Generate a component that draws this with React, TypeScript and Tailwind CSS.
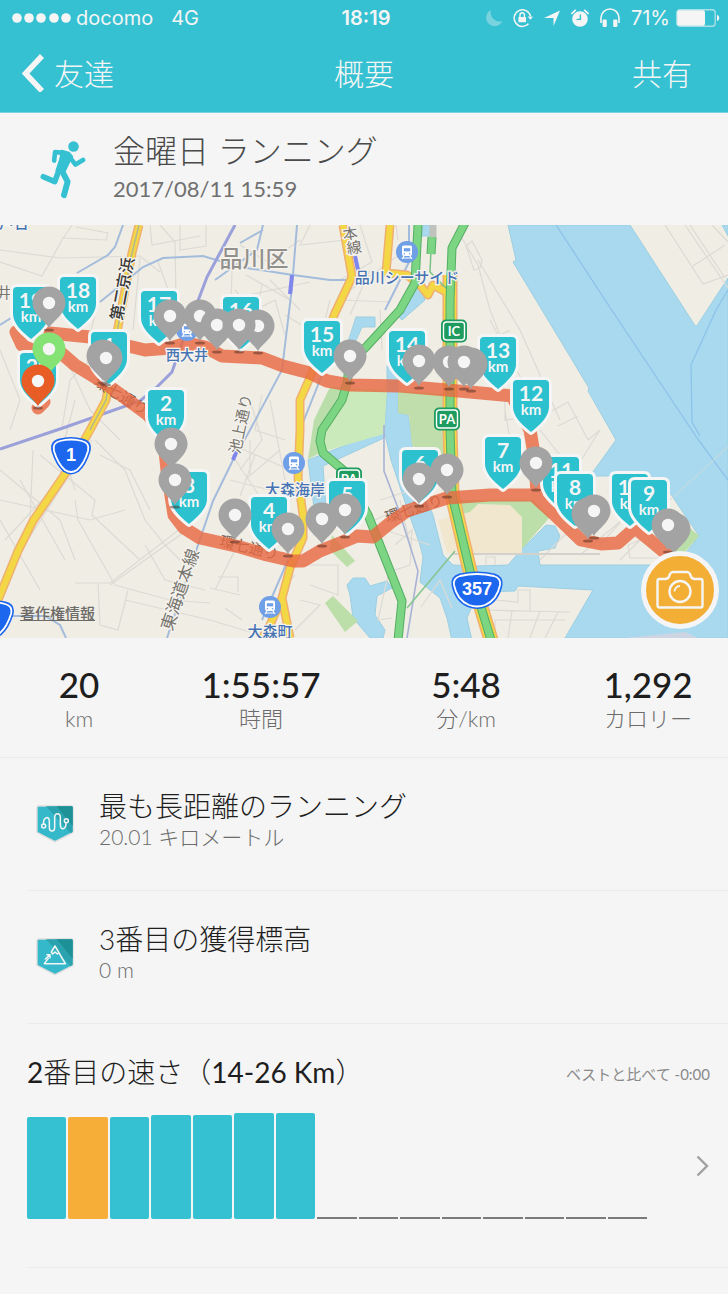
import type { ReactNode } from "react";

type Point = [number, number];

interface Split {
  km: number;
  at: Point;
}

interface Pin {
  at: Point;
  color?: string;
}

const stats = [
  { value: "20", label: "km" },
  { value: "1:55:57", label: "時間" },
  { value: "5:48", label: "分/km" },
  { value: "1,292", label: "カロリー" },
];

// bar heights in px, 0 = no run yet
const paceBars = [102, 102, 102, 104, 104, 106, 106, 0, 0, 0, 0, 0, 0, 0, 0];
const currentBar = 1;

const splits: Split[] = [
  { km: 19, at: [31, 287] },
  { km: 18, at: [78, 277] },
  { km: 17, at: [159, 291] },
  { km: 16, at: [241, 297] },
  { km: 15, at: [322, 321] },
  { km: 14, at: [407, 331] },
  { km: 13, at: [498, 337] },
  { km: 12, at: [531, 380] },
  { km: 1, at: [109, 332] },
  { km: 2, at: [166, 390] },
  { km: 20, at: [38, 353] },
  { km: 3, at: [189, 472] },
  { km: 4, at: [269, 497] },
  { km: 5, at: [347, 481] },
  { km: 6, at: [420, 450] },
  { km: 7, at: [503, 437] },
  { km: 11, at: [561, 457] },
  { km: 8, at: [575, 474] },
  { km: 10, at: [630, 474] },
  { km: 9, at: [649, 480] },
];

const pins: Pin[] = [
  { at: [49, 303] },
  { at: [49, 349], color: "#84e374" },
  { at: [38, 381], color: "#e85c26" },
  { at: [103, 356] },
  { at: [106, 358] },
  { at: [200, 316] },
  { at: [170, 316] },
  { at: [258, 326] },
  { at: [217, 325] },
  { at: [239, 325] },
  { at: [350, 356] },
  { at: [471, 364] },
  { at: [449, 362] },
  { at: [464, 362] },
  { at: [419, 361] },
  { at: [171, 444] },
  { at: [175, 480] },
  { at: [235, 515] },
  { at: [288, 529] },
  { at: [322, 519] },
  { at: [345, 510] },
  { at: [447, 470] },
  { at: [419, 479] },
  { at: [536, 463] },
  { at: [588, 514] },
  { at: [594, 511] },
  { at: [674, 529] },
  { at: [668, 525] },
];

const streets = [
  "M0 262 L42 276 L62 240 L72 225 M62 238 L106 240 L108 233 L76 227 M0 250 L60 258 L140 256 L160 272 M160 225 L175 242 L176 300 M150 225 L152 245 L200 236",
  "M180 225 V250 L206 246 V225 M158 262 L172 300 M98 302 L90 335 M140 258 L133 330 M60 345 L90 410 L120 440 M100 350 L70 380 L62 428 M0 350 L20 400 L10 430",
  "M75 400 L62 450 L75 490 M95 440 L125 470 L145 520 L165 545 L180 560 M0 470 L60 520 L75 560 M0 500 L90 520 L125 510 M5 540 L70 470 M15 560 L92 440",
  "M0 520 L40 590 M20 480 L65 560 M40 455 L95 500 L92 515 L140 560 M33 450 L30 520 M100 455 L130 470 L150 510 M75 583 L110 583 L185 525 M75 500 L78 520 L115 585 L170 600 L210 603",
  "M110 585 L190 528 M98 583 L100 625 L118 630 L128 590 M125 600 L210 620 L250 632 M210 588 L240 595 M215 590 L235 550 M218 577 H238 V592 M225 608 L242 620 M145 545 L165 580 L205 590",
  "M240 245 L268 262 L300 240 M246 275 L290 300 M225 300 L310 282 M235 290 L270 330 M262 285 L255 320 M270 280 L300 310 M285 315 L310 330 L330 320 M230 340 L232 270 M245 315 L275 300 L285 335",
  "M310 225 L300 245 L345 240 M330 300 L320 340 M340 300 L390 302 M360 225 L372 262 L340 280 M396 225 L398 240 M380 310 L382 350 M370 270 L350 315 M350 290 L420 240 M460 235 L478 265 L490 310 L500 335 L510 330 M478 260 L520 330 L560 420",
  "M466 246 L472 241 L482 260 L480 268 L474 270 Z M490 320 L530 395 M505 410 L510 440 M550 412 L568 402 L588 440 M558 426 L578 416 M545 395 L520 405 M505 400 V420 L515 419",
  "M665 225 L703 284 L728 275 M693 266 L725 245 M685 225 L728 288 M690 225 L725 278 M712 225 L728 242 M588 440 L600 430 L575 470 M540 430 L560 455",
  "M250 400 L262 440 L240 470 M262 395 L255 430 L285 440 M240 448 L290 470 M245 480 L280 450 M250 440 V475 M270 400 L285 480 M230 480 L270 490 M232 455 L262 500 M240 496 L255 455",
  "M310 520 L330 510 M300 565 L338 565 V595 L310 585 M300 600 L320 605 L295 630 M295 575 L280 590 M380 500 L412 490 L415 515 M385 530 L430 545 M395 545 L412 530 L410 565 L395 570 M400 500 L410 545",
  "M375 520 L400 508 M380 550 L400 600 M388 575 L378 620 L392 618 M421 607 L440 580 L452 608 M495 600 L518 602 V590 H530 V611 H505 M480 610 L570 612 M495 638 V620 H565 M512 611 L508 638 M540 611 L530 638 M558 612 L545 638",
  "M486 565 V557 H495 V565 M540 560 L600 500 M580 555 L640 505 L670 545 M620 560 L640 540 L628 545 L630 558 H660 M600 545 L640 500",
];

const route =
  "M44 402 L38 408 M16 332 L22 345 L36 352 L60 352 L75 365 L106 384 L147 414 L163 432 L167 470 L174 515 L184 528 L200 538 L240 547 L267 555 L293 561 L303 561 L320 551 L340 543 L357 536 L373 537 L390 523 L407 511 L447 498 L490 495 L533 495 L555 515 L581 540 L601 544 L618 543 L635 528 L651 541 L675 561 M50 333 L90 337 L145 350 L170 348 L187 343 L205 347 L222 356 L262 358 L283 366 L310 373 L327 381 L350 385 L400 386 L470 392 L512 396 L530 430 L535 460 L537 495";

function StatusBar() {
  return (
    <div className="grid h-9 grid-cols-3 items-center pr-2 pl-3 font-['Inter',sans-serif] text-xl">
      <div className="flex items-center">
        <svg viewBox="0 0 60 10" className="mr-1 h-[10px] w-[60px] shrink-0 fill-current" aria-hidden="true">
          {[5, 17, 29, 42, 54].map((x) => (
            <circle key={x} cx={x} cy="5" r="4.8" />
          ))}
        </svg>
        <span>docomo</span>
        <span className="ml-[18px]">4G</span>
      </div>
      <div className="text-center font-semibold">18:19</div>
      <div className="flex items-center justify-end gap-[10px]">
        <svg viewBox="0 0 18 18" className="h-[18px] w-[18px] shrink-0 fill-current opacity-35" aria-hidden="true">
          <path d="M6 1 A8.5 8.5 0 1 0 17.5 12 A9 9 0 0 1 6 1 Z" />
        </svg>
        <svg viewBox="0 0 20 20" className="h-5 w-5 shrink-0 fill-none stroke-current" aria-hidden="true">
          <path d="M17.5 8 A8.3 8.3 0 1 0 15.5 15.8" strokeWidth="1.5" />
          <path d="M14.8 8.5 H20 L17.4 11.8 Z" className="fill-current stroke-none" />
          <path d="M5.4 9 H13 V14.2 H5.4 Z" className="fill-current stroke-none" />
          <path d="M7 9.5 V7 a2.2 2.2 0 0 1 4.4 0 V9.5" strokeWidth="1.4" />
        </svg>
        <svg viewBox="0 0 18 18" className="h-[18px] w-[18px] shrink-0 fill-current" aria-hidden="true">
          <path d="M17 1.5 L10.5 17 V9 H1 Z" />
        </svg>
        <svg viewBox="0 0 18 18" className="h-[18px] w-[18px] shrink-0 fill-current" aria-hidden="true">
          <circle cx="9" cy="10" r="7.8" />
          <path d="M1 4.4 L4.2 1.4 M13.8 1.4 L17 4.4" className="stroke-current" strokeWidth="1.9" strokeLinecap="round" />
          <path d="M9.4 5.4 V10.4 H5.6" className="fill-none stroke-[#35c1d2]" strokeWidth="1.4" />
        </svg>
        <svg viewBox="0 0 22 20" className="h-5 w-[22px] shrink-0 fill-none stroke-current" aria-hidden="true">
          <path d="M2 15 V10 a9 9 0 0 1 18 0 V15" strokeWidth="1.6" />
          <rect x="3.6" y="11.5" width="4.2" height="7.4" rx="1.2" className="fill-current stroke-none" />
          <rect x="14.2" y="11.5" width="4.2" height="7.4" rx="1.2" className="fill-current stroke-none" />
        </svg>
        <div className="flex items-center gap-[6px]">
          <span>71%</span>
          <svg viewBox="0 0 44 18" className="h-[18px] w-[44px] shrink-0 fill-current" aria-hidden="true">
            <rect x="0.8" y="0.8" width="38.4" height="16.4" rx="3" className="fill-none stroke-current opacity-60" strokeWidth="1.4" />
            <rect x="1.2" y="1.2" width="27.8" height="15.6" rx="2" />
            <path d="M41 5.8 a3.4 3.4 0 0 1 0 6.4 Z" />
          </svg>
        </div>
      </div>
    </div>
  );
}

function Header() {
  return (
    <header className="border-b border-[#7ad3de] bg-[#35c1d2] text-[#f5f5f5]">
      <StatusBar />
      <nav className="grid h-[76px] grid-cols-3 items-center pr-9 pb-[2px] pl-[22px] text-3xl font-light">
        <button type="button" className="flex items-center gap-[10px] justify-self-start">
          <svg viewBox="0 0 22 38" className="h-[38px] w-[22px] fill-none stroke-current" aria-hidden="true">
            <path d="M20 2 L3.5 19.5 L20 37" strokeWidth="5.6" />
          </svg>
          <span>友達</span>
        </button>
        <h1 className="pl-[14px] text-center">概要</h1>
        <button type="button" className="justify-self-end">
          共有
        </button>
      </nav>
    </header>
  );
}

function RunnerIcon() {
  return (
    <svg viewBox="0 0 140 178" className="h-[59px] w-[46px] shrink-0 fill-none stroke-[#35c1d2]" strokeLinecap="round" strokeLinejoin="round" aria-hidden="true">
      <circle cx="102" cy="19" r="16" className="fill-[#35c1d2] stroke-none" />
      <path d="M43 62 L46 36 L72 38" strokeWidth="14" />
      <path d="M66 32 L88 38 L98 50 L88 68 L74 97 L50 92 L62 56 Z" className="fill-[#35c1d2]" strokeWidth="6" />
      <path d="M88 48 L108 74 L131 60" strokeWidth="14" />
      <path d="M58 90 L45 126 L10 111" strokeWidth="17" />
      <path d="M66 92 L84 126 L73 167" strokeWidth="18" />
    </svg>
  );
}

function ShieldMarker({ km, at }: Split) {
  return (
    <g transform={`translate(${at[0]} ${at[1]})`} fill="#f5f5f5" textAnchor="middle" fontWeight="700">
      <path
        d="M-14 0 H14 Q18 0 18 4 V27 C18 36 10 44 0 52 C-10 44 -18 36 -18 27 V4 Q-18 0 -14 0 Z"
        fill="#2bc1cf"
        stroke="#f5f5f5"
        strokeWidth="6"
        strokeLinejoin="round"
        paintOrder="stroke"
      />
      <text y="21" fontSize="21">
        {km}
      </text>
      <text y="35" fontSize="15">
        km
      </text>
    </g>
  );
}

function PinMarker({ at, color = "#a3a3a3" }: Pin) {
  return (
    <g transform={`translate(${at[0]} ${at[1]})`}>
      <ellipse cy="27" rx="5" ry="1.5" fill="#4d2a1f" opacity="0.5" />
      <path d="M0 25 C-4 18 -16.5 11 -16.5 0 A16.5 16.5 0 0 1 16.5 0 C16.5 11 4 18 0 25 Z" fill={color} />
      <circle r="6.2" fill="#f5f5f5" />
    </g>
  );
}

function Station({ at }: { at: Point }) {
  return (
    <g transform={`translate(${at[0]} ${at[1]})`}>
      <circle r="11" fill="#6f9fe6" />
      <path d="M-3.5 -6.5 H3.5 Q5 -6.5 5 -5 V2 Q5 4 3 4 H-3 Q-5 4 -5 2 V-5 Q-5 -6.5 -3.5 -6.5 Z" fill="#fff" />
      <path d="M-3.2 -3.8 H3.2 V-0.6 H-3.2 Z" fill="#6f9fe6" />
      <path d="M-3 4 L-5 7 M3 4 L5 7 M-4 6 H4" stroke="#fff" strokeWidth="1.2" />
      <circle cx="-2.6" cy="1.8" r="0.8" fill="#6f9fe6" />
      <circle cx="2.6" cy="1.8" r="0.8" fill="#6f9fe6" />
    </g>
  );
}

function Interchange({ at, children }: { at: Point; children: ReactNode }) {
  return (
    <g transform={`translate(${at[0]} ${at[1]})`}>
      <rect x="-13" y="-11.5" width="26" height="23" rx="5" fill="#1e9b5e" />
      <rect x="-10.5" y="-9" width="21" height="18" rx="3" fill="#1e9b5e" stroke="#fff" strokeWidth="1.4" />
      <text y="5" textAnchor="middle" fontSize="13" fontWeight="700" fill="#fff">
        {children}
      </text>
    </g>
  );
}

function RouteShield({ at, wide = false, children }: { at: Point; wide?: boolean; children?: ReactNode }) {
  const shape = wide
    ? "M-17 -14 Q0 -18 17 -14 Q24 -12 23 -5 Q20 10 8 15 Q0 18 -8 15 Q-20 10 -23 -5 Q-24 -12 -17 -14 Z"
    : "M-11 -15 Q0 -18 11 -15 Q19 -13 17 -5 Q13 8 6 14 Q0 18 -6 14 Q-13 8 -17 -5 Q-19 -13 -11 -15 Z";
  return (
    <g transform={`translate(${at[0]} ${at[1]})`}>
      <path d={shape} fill="#1d66ee" stroke="#1d66ee" strokeWidth="5" />
      <path d={shape} fill="#1d66ee" stroke="#fff" strokeWidth="1.8" />
      <text y="5" textAnchor="middle" fontSize="18" fontWeight="700" fill="#fff" fontFamily="'Liberation Sans', sans-serif">
        {children}
      </text>
    </g>
  );
}

function RunMap() {
  return (
    <svg viewBox="0 225 728 413" className="block w-full" role="img" aria-label="ランニングのルート" fontFamily="Lato, 'Noto Sans CJK JP', sans-serif">
      <rect y="225" width="728" height="413" fill="#f0ede5" />

      {/* water */}
      <g fill="#a9d9ee" stroke="#9ccfe2" strokeWidth="1">
        <path d="M508 225 L516 260 L513 262 L589 388 L588 391 L616 440 L590 476 L616 476 L668 490 L699 536 L676 565 L540 565 L538 551 L555 548 L560 536 L555 526 L546 525 L521 550 L508 565 L478 566 L453 565 L443 555 L433 515 L425 495 L407 461 L413 445 L408 415 L398 413 V366 H387 L387 390 L384 438 L323 466 L326 508 L314 508 L308 460 L384 430 L391 460 L407 508 L420 545 L423 557 L420 582 L440 598 L447 618 L453 645 L473 645 L467 618 L478 592 L515 591 L518 586 L593 590 L565 638 L728 638 V278 L696 327 L630 225 Z" />
        <path d="M423 225 H431 L429 236 H422 Z M722 225 H728 V236 Z M419 285 L425 300 L402 320 L396 314 Z" />
        <path d="M356 317 H375 V327 H362 L354 345 H347 Z" />
        <path d="M347 585 L353 578 L365 578 L370 586 L387 581 L392 588 L377 596 L375 615 L385 630 L383 638 H370 L353 618 L350 595 Z" />
      </g>
      <path d="M625 638 L685 632 L698 638 Z" fill="#cdd5e2" />
      <path d="M690 528 L699 536 L676 562 L668 555 Z" fill="#badfa8" />
      <g fill="none" stroke="#8dc3ea" strokeWidth="1.3">
        <path d="M556 225 L613 312 L697 438 L728 480" />
        <path d="M728 290 L716 310 L691 365 L692 422 L700 436" />
      </g>
      <path d="M670 500 L728 447" stroke="#cfd8d8" fill="none" />

      {/* parks */}
      <path d="M330 387 L387 390 L384 434 L322 452 L308 459 Z" fill="#cbeabb" />
      <path d="M330 387 L347 388 L320 432 L322 452 L308 459 L314 420 Z" fill="#b9deaa" />
      <path d="M398 391 L446 394 L448 462 L432 462 L412 445 L409 415 L398 413 Z" fill="#c0deab" />
      <path d="M455 500 H533 L550 517 L522 549 V553 H470 Z" fill="#bcdfa9" />
      <path d="M438 520 L470 512 L478 504 L510 505 L522 517 V553 H447 Z" fill="#f1e7cf" />
      <path d="M333 596 L358 621 L345 632 L325 603 Z M332 535 L355 561 L347 567 L330 550 Z" fill="#bcdfa9" />

      {streets.map((d) => (
        <path key={d} d={d} fill="none" stroke="#dcdad4" strokeWidth="1.2" />
      ))}
      <path d="M452 554 H600" stroke="#d2d1cc" strokeWidth="2" />

      {/* railways */}
      <g fill="none" stroke="#a4bcdc" strokeWidth="2">
        <path d="M123 225 L115 247 L108 255 L77 273 M0 325 L40 300 M100 302 L143 267 L163 258 L203 256 L240 267 L293 275 L330 280 L356 280" />
        <path d="M297 225 L292 287 L282 370 L250 430 L233 460 L213 501 L197 548 L167 638" />
        <path d="M240 243 L263 230 M263 225 L257 250 L215 280 M300 430 L340 330 M288 560 L262 620 M409 225 V262 L385 310 M0 616 H45 L60 625 L66 638" />
      </g>
      <path d="M384 425 V471 L398 508 L418 571 L407 638" fill="none" stroke="#a9b3d6" strokeWidth="1.6" />
      <path d="M235 225 L207 277 L182 343 L172 372 L157 387 L140 401 L63 428 L0 449" fill="none" stroke="#9aa0da" strokeWidth="3" />
      <path d="M292 275 L290 294 M355 256 L358 270 M237 450 L233 460" fill="none" stroke="#7f86ec" strokeWidth="4" />

      {/* trunk roads, casing first */}
      {[
        { color: "#efb070", width: 9, edge: 15 },
        { color: "#f4d744", width: 6, edge: 12 },
      ].map(({ color, width, edge }) => (
        <g key={color} fill="none" stroke={color} strokeWidth={width} strokeLinejoin="round">
          <path d="M139 225 L132 253 L118 327 L106 400 L90 430 L67 471 L33 521 L18 551 L-4 605" />
          <path d="M343 225 L352 277 L335 313 L312 373 L300 400 L300 430 L298 478 L303 515 L303 538 L290 568 L282 598 L290 638 M282 598 L270 625 L262 638" />
          <path d="M390 225 L386 273 L407 275 L420 285 L428 295 L433 285 L446 292" />
          <path d="M450 275 V430 L452 495 L470 571 L491 640" strokeWidth={edge} />
        </g>
      ))}
      <path d="M139 225 L132 253 L118 327 L106 400 L90 430" fill="none" stroke="#b5b795" strokeWidth="1.5" />
      <path d="M455 551 L407 608" fill="none" stroke="#83c58e" strokeWidth="1.5" />
      <path d="M433 225 V237" stroke="#c0c3bd" strokeWidth="7" />
      <path d="M431 250 L430 272 L448 290" stroke="#79c284" strokeWidth="1.5" fill="none" />
      {[
        { color: "#55ae63", width: 9 },
        { color: "#7bd582", width: 7 },
      ].map(({ color, width }) => (
        <g key={color} fill="none" stroke={color} strokeWidth={width} strokeLinejoin="round">
          <path d="M466 221 L452 248 L450 300 V430 L452 495 L470 571 L491 640" />
          <path d="M418 225 L415 283 L400 310 L366 347 L350 362 L347 383 L342 400 L322 430 L320 441 L323 453 L343 470 L368 515 L402 601 L398 640" />
          <path d="M432 237 L431 254" />
        </g>
      ))}

      {/* street names */}
      <g fill="#77756f" stroke="#f5f3ee" strokeWidth="2.5" paintOrder="stroke" textAnchor="middle" fontSize="15">
        <text transform="translate(123 289) rotate(-79)" y="5" fontSize="16" fontWeight="500" fill="#393836">
          第二京浜
        </text>
        <text transform="translate(241 424) rotate(-78)" y="5">
          池上通り
        </text>
        <text transform="translate(181 590) rotate(-71)" y="5" fontSize="17">
          東海道本線
        </text>
        <text transform="translate(351 239) rotate(-8)">本</text>
        <text transform="translate(355 253) rotate(-8)">線</text>
        <text x="4" y="298">
          井
        </text>
        <text x="254" y="267" fontSize="23" fontWeight="500" fill="#92908c">
          品川区
        </text>
      </g>
      <g fill="#6d5a50" textAnchor="middle" fontSize="15">
        <text transform="translate(121 396) rotate(31)" y="5">
          環七通り
        </text>
        <text transform="translate(249 548) rotate(13)" y="5">
          環七通り
        </text>
        <text transform="translate(414 509) rotate(-18)" y="5">
          環七通り
        </text>
      </g>

      <path d={route} fill="none" stroke="#e86a43" strokeWidth="13" strokeLinecap="round" strokeLinejoin="round" opacity="0.82" />

      <g fill="#4673b4" stroke="#f5f3ee" strokeWidth="2.5" paintOrder="stroke" textAnchor="middle" fontSize="15" fontWeight="500">
        <text x="407" y="283">
          品川シーサイド
        </text>
        <text x="187" y="360" fontSize="14">
          西大井
        </text>
        <text x="295" y="495">
          大森海岸
        </text>
        <text x="270" y="637">
          大森町
        </text>
        <text x="14" y="228">
          戸台
        </text>
      </g>
      <Station at={[407, 252]} />
      <Station at={[294, 463]} />
      <Station at={[270, 607]} />
      <Station at={[187, 330]} />
      <Interchange at={[454, 331]}>IC</Interchange>
      <Interchange at={[447, 419]}>PA</Interchange>
      <Interchange at={[349, 479]}>PA</Interchange>
      <RouteShield at={[71, 456]}>1</RouteShield>
      <RouteShield at={[477, 590]} wide>
        357
      </RouteShield>
      <RouteShield at={[-6, 619]} />

      {splits.map((split) => (
        <ShieldMarker key={split.km} {...split} />
      ))}
      {pins.map((pin) => (
        <PinMarker key={pin.at.join()} {...pin} />
      ))}
    </svg>
  );
}

function CameraButton() {
  return (
    <button
      type="button"
      aria-label="写真を追加"
      className="absolute right-[9px] bottom-[9px] flex h-[78px] w-[78px] items-center justify-center rounded-full border-[5px] border-[#f5f5f5] bg-[#f3ae36]"
    >
      <svg viewBox="0 0 48 40" className="h-10 w-12 fill-none stroke-[#f5f5f5]" strokeWidth="2.4" strokeLinejoin="round" aria-hidden="true">
        <path d="M3.5 9 H9 Q12 9 13 6.5 L14 4 Q15 2 17 2 H31 Q33 2 34 4 L35 6.5 Q36 9 39 9 H44.5 Q46.5 9 46.5 11 V35.5 Q46.5 37.5 44.5 37.5 H3.5 Q1.5 37.5 1.5 35.5 V11 Q1.5 9 3.5 9 Z" />
        <circle cx="24" cy="21.5" r="10.5" />
        <path d="M18.5 21.5 a5.5 5.5 0 0 1 5.5 -5.5" strokeWidth="1.8" />
      </svg>
    </button>
  );
}

function Badge({ children }: { children: ReactNode }) {
  return (
    <svg viewBox="0 0 114 114" className="mt-4 h-[38px] w-[38px] shrink-0 fill-none" aria-hidden="true">
      <path d="M8 3 H106 Q111 3 111 8 V82 L57 110 L3 82 V8 Q3 3 8 3 Z" fill="#35b9ca" stroke="#dcdcdc" strokeWidth="4" />
      <path d="M30 4 H107 Q110 4 110 8 V80 L104 85 Z" fill="#2aa3ae" />
      <path d="M62 4 H107 Q110 4 110 8 V62 Z" fill="#1d9195" />
      <g stroke="#f5f5f5" strokeWidth="4.5" strokeLinecap="round" strokeLinejoin="round">
        {children}
      </g>
    </svg>
  );
}

function Achievement({ title, detail, icon }: { title: string; detail: string; icon: ReactNode }) {
  return (
    <li className="ml-[27px] flex h-[133px] gap-[25px] border-b border-[#ebebeb] pt-[31px] pl-[9px]">
      {icon}
      <div>
        <h3 className="text-[28px] leading-[34px] font-light text-[#1e1e1e]">{title}</h3>
        <p className="text-[21px] leading-7 font-light text-[#6c6c6c]">{detail}</p>
      </div>
    </li>
  );
}

function PaceComparison() {
  return (
    <section className="ml-[27px] border-b border-[#ebebeb] pt-7 pr-[18px] pb-12">
      <div className="flex items-center justify-between">
        <h3 className="text-[28px] leading-10 text-[#1e1e1e]">
          2<span className="font-light">番目の速さ（</span>
          14-26 Km
          <span className="font-light">）</span>
        </h3>
        <p className="pt-1 text-[15px] text-[#8a8a8a]">ベストと比べて -0:00</p>
      </div>
      <div className="mt-5 flex items-center">
        <div className="mr-[49px] flex h-[107px] flex-1 items-end gap-[2px]">
          {paceBars.map((height, index) => (
            <div
              key={index}
              className={
                height === 0
                  ? "h-[2px] flex-1 bg-[#7b7b7b]"
                  : index === currentBar
                    ? "flex-1 rounded-[2px] bg-[#f6ae38]"
                    : "flex-1 rounded-[2px] bg-[#35c1d2]"
              }
              style={height ? { height } : undefined}
            />
          ))}
        </div>
        <button type="button" aria-label="詳細">
          <svg viewBox="0 0 14 22" className="h-[22px] w-[14px] fill-none stroke-[#a0a0a0]" aria-hidden="true">
            <path d="M1.5 1.5 L11 11 L1.5 20.5" strokeWidth="2.4" />
          </svg>
        </button>
      </div>
    </section>
  );
}

export default function App() {
  return (
    <div className="min-h-screen bg-[#f5f5f5] font-['Lato','Noto_Sans_CJK_JP',sans-serif]">
      <Header />

      <main>
        <section className="flex h-28 items-center gap-[27px] px-10">
          <RunnerIcon />
          <div>
            <h2 className="text-[32px] leading-10 font-light text-[#4a4a4a]">金曜日 ランニング</h2>
            <p className="text-[22px] leading-9 text-[#707070]">2017/08/11 15:59</p>
          </div>
        </section>

        <section className="relative">
          <RunMap />
          <a href="#copyright" className="absolute bottom-[14px] left-5 text-[15px] font-medium text-[#6c6b68] underline">
            著作権情報
          </a>
          <CameraButton />
        </section>

        <dl className="grid h-[120px] grid-cols-[158fr_206fr_204fr_160fr] border-b border-[#ebebeb] pt-[26px] text-center">
          {stats.map((stat) => (
            <div key={stat.label} className="flex flex-col-reverse justify-end">
              <dt className="text-[22px] leading-[30px] font-light text-[#6c6c6c]">{stat.label}</dt>
              <dd className="text-[35px] leading-10 font-medium text-[#1e1e1e]">{stat.value}</dd>
            </div>
          ))}
        </dl>

        <ul>
          <Achievement
            title="最も長距離のランニング"
            detail="20.01 キロメートル"
            icon={
              <Badge>
                <circle cx="23" cy="63" r="6" />
                <path d="M23 57 C20 38 40 30 40 48 V67 C40 82 56 82 56 67 V38 C56 22 73 22 73 38 V60 C73 76 90 76 90 54" />
                <circle cx="91" cy="47" r="6" />
              </Badge>
            }
          />
          <Achievement
            title="3番目の獲得標高"
            detail="0 m"
            icon={
              <Badge>
                <path d="M37 61 L25 77 H88 L57 24 L46 42 L50 48 L57 42 L64 48 L69 44" />
                <path d="M28 63 L41 51 M33 50 H42 V59" />
              </Badge>
            }
          />
        </ul>

        <PaceComparison />
      </main>
    </div>
  );
}
